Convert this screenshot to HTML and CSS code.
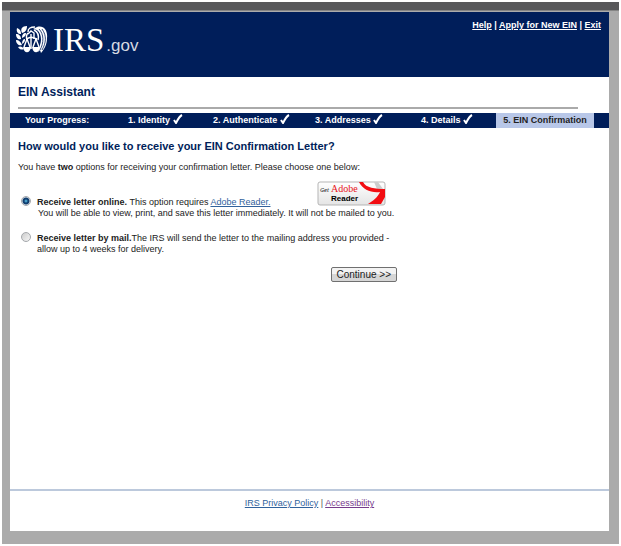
FILE: index.html
```html
<!DOCTYPE html>
<html lang="en">
<head>
<meta charset="utf-8">
<title>EIN Assistant</title>
<link rel="stylesheet" href="styles.css">
</head>
<body>
<div class="frame">
  <div class="page">
    <header class="banner">
      <div class="brand">
        <svg class="emblem" viewBox="0 0 32 28" aria-hidden="true">
          <g class="leaves">
            <path d="M11 0C6 0 4 3 6 7C10 6 11 3 11 0Z"/>
            <path d="M1 2C0 6 2 8 5 8C5 5 4 3 1 2Z"/>
            <path d="M0 8C0 12 2 14 5 13C5 10 3 8 0 8Z"/>
            <path d="M10 7C7 7 6 9 6 12C9 11 10 9 10 7Z"/>
            <path d="M0 14C0 18 3 20 6 19C5 16 3 14 0 14Z"/>
            <path d="M9 13C7 13 6 15 6 18C9 16 9 15 9 13Z"/>
            <path d="M2 21C4 24 6 24 8 23C6 20 4 20 2 21Z"/>
            <path d="M21 1C28 -1 32 5 31 12C31 18 29 22 25 27L24 24L22 26L24 19C26 14 25 7 21 4L17 3Z"/>
            <path d="M7 21H15C14 28 8 28 7 21ZM16 21H24C23 28 17 28 16 21Z"/>
          </g>
          <g class="cuts">
            <path d="M23 3C28 8 28 17 24 24M26 3C31 10 30 17 26 24"/>
          </g>
          <g class="lines">
            <path d="M12 6C12 2 15 1 19 1M12 8L15 5L18 7V13M12 7C10 9 10 11 11 14"/>
            <path d="M18 4C22 6 23 10 22 14"/>
            <path d="M15 8V23M10 13L15 11L21 13"/>
            <path d="M11 13L8 21M11 13L14 21M20 13L17 21M20 13L23 21"/>
          </g>
        </svg>
        <span class="brand-name">IRS</span><span class="brand-suffix">.gov</span>
      </div>
      <nav class="tools"><a href="#">Help</a> | <a href="#">Apply for New EIN</a> | <a href="#">Exit</a></nav>
    </header>

    <h1 class="title">EIN Assistant</h1>

    <ol class="progress">
      <li class="progress-label">Your Progress:</li>
      <li>1. Identity <svg class="check" viewBox="0 0 10 10"><path d="M1 6L3 9C5 5 7 2 9 1"/></svg></li>
      <li>2. Authenticate <svg class="check" viewBox="0 0 10 10"><path d="M1 6L3 9C5 5 7 2 9 1"/></svg></li>
      <li>3. Addresses <svg class="check" viewBox="0 0 10 10"><path d="M1 6L3 9C5 5 7 2 9 1"/></svg></li>
      <li>4. Details <svg class="check" viewBox="0 0 10 10"><path d="M1 6L3 9C5 5 7 2 9 1"/></svg></li>
      <li class="current" aria-current="step">5. EIN Confirmation</li>
    </ol>

    <main class="content">
      <h2>How would you like to receive your EIN Confirmation Letter?</h2>
      <p>You have <b>two</b> options for receiving your confirmation letter. Please choose one below:</p>
      <form class="options">
        <div class="option">
          <input type="radio" id="online" name="delivery" checked>
          <div class="option-text">
            <div class="option-head">
              <span><label for="online"><b>Receive letter online.</b> This option requires</label> <a href="#">Adobe Reader.</a></span>
              <a class="reader" href="#" aria-label="Get Adobe Reader">
                <svg viewBox="0 0 69 25">
                  <defs>
                    <linearGradient id="shade" x1="0" y1="0" x2="0" y2="1">
                      <stop offset="0" stop-color="#fff"/>
                      <stop offset="1" stop-color="#e4e4e4"/>
                    </linearGradient>
                  </defs>
                  <rect x="1" y="1" width="67" height="23" rx="2" fill="url(#shade)" stroke="#b5b5b5"/>
                  <path d="M57 1H61L66 8V9L60 8Z" fill="#ccc"/>
                  <path d="M42 1H46C49 7 58 8 68 8V16L64 23H51C56 20 61 16 63 11C54 12 46 9 42 1Z" fill="#f20d12"/>
                  <text class="reader-get" x="3" y="11">Get</text>
                  <text class="reader-adobe" x="14" y="11">Adobe</text>
                  <text class="reader-name" x="14" y="20">Reader</text>
                </svg>
              </a>
            </div>
            <div class="note">You will be able to view, print, and save this letter immediately. It will not be mailed to you.</div>
          </div>
        </div>
        <div class="option">
          <input type="radio" id="mail" name="delivery">
          <label class="option-text" for="mail"><b>Receive letter by mail.</b>The IRS will send the letter to the mailing address you provided -<br>allow up to 4 weeks for delivery.</label>
        </div>
        <button class="continue" type="button">Continue &gt;&gt;</button>
      </form>
    </main>

    <footer class="footer"><a href="#">IRS Privacy Policy</a> | <a class="visited" href="#">Accessibility</a></footer>
  </div>
</div>
</body>
</html>
```
FILE: styles.css
```css
* {
  box-sizing: border-box;
}

body {
  margin: 0;
  padding: 2px;
  min-height: 100vh;
  display: flex;
  background: #fff;
  color: #222;
  font: 9px/11px "Liberation Sans", Arial, sans-serif;
}

.frame {
  flex: 1;
  display: flex;
  padding: 0 10px 13px 8px;
  background: #ababab;
  border-top: 8px solid #58585a;
  box-shadow: inset 0 1px #858585;
}

.page {
  flex: 1;
  display: flex;
  flex-direction: column;
  margin-top: 2px;
  background: #fff;
}

.banner {
  display: flex;
  justify-content: space-between;
  align-items: flex-start;
  height: 65px;
  padding: 8px 8px 0 6px;
  background: #001e5a;
  color: #fff;
  font-weight: bold;
}

.brand {
  display: flex;
  align-items: baseline;
  padding-top: 4px;
  font-weight: normal;
}

.emblem {
  width: 32px;
  height: 28px;
  align-self: center;
  margin-right: 5px;
}

.leaves {
  fill: #fff;
}

.lines {
  fill: none;
  stroke: #fff;
  stroke-width: 1.4;
}

.cuts {
  fill: none;
  stroke: #001e5a;
  stroke-width: 0.8;
}

.brand-name {
  font: 33px/32px "Liberation Serif", "Times New Roman", serif;
}

.brand-suffix {
  margin-left: 2px;
  color: #d5d9e2;
  font-size: 17px;
}

.tools {
  font-size: 9px;
}

.tools a {
  color: inherit;
}

.title {
  margin: 9px 31px 4px 8px;
  padding-bottom: 9px;
  border-bottom: 2px solid #aaa;
  color: #001e5a;
  font-size: 12px;
  line-height: 12px;
}

.progress {
  display: grid;
  grid-template-columns: 118fr 85fr 102fr 106fr 75fr 98fr 15fr;
  margin: 0;
  padding: 0;
  list-style: none;
  background: #001e5a;
  color: #fff;
  font-size: 9px;
  font-weight: bold;
  line-height: 15px;
  white-space: nowrap;
}

.progress-label {
  padding-left: 15px;
}

.current {
  background: #b8c7e8;
  color: #222;
  text-align: center;
}

.check {
  width: 10px;
  height: 10px;
  vertical-align: -1px;
  fill: none;
  stroke: #fff;
  stroke-width: 2;
}

.content {
  flex: 1;
  padding: 12px 8px;
}

h2 {
  margin: 0 0 10px;
  color: #001e5a;
  font-size: 11px;
  line-height: 12px;
}

p {
  margin: 0;
}

a {
  color: #31629c;
}

.options {
  display: flex;
  flex-direction: column;
  gap: 13px;
  max-width: 400px;
  padding: 8px 0 0 3px;
}

.option {
  display: flex;
  align-items: flex-end;
  gap: 6px;
}

.option input {
  appearance: none;
  flex: none;
  width: 10px;
  height: 10px;
  margin: 0 0 13px;
  border: 1px solid #a5a8ac;
  border-radius: 50%;
  background: linear-gradient(135deg, #ccc, #f6f6f6);
}

.option input:checked {
  background: radial-gradient(circle, #5fd0f5 0, #123f70 2px, #123f70 3px, #e4eaf0 4px);
}

.option-text {
  white-space: nowrap;
}

.option-head {
  display: flex;
  align-items: flex-end;
  gap: 46px;
}

.reader {
  width: 69px;
  height: 25px;
  margin-bottom: 2px;
}

.reader svg {
  display: block;
}

.reader-get {
  font: italic 6px "Open Sans", sans-serif;
}

.reader-adobe {
  fill: #e8141a;
  font: 10px "Liberation Serif", serif;
}

.reader-name {
  font: bold 8px "Liberation Sans", sans-serif;
}

.note {
  padding-left: 1px;
}

.continue {
  align-self: flex-end;
  margin: -1px 21px 0 0;
  padding: 0 5px;
  border: 1px solid #707070;
  border-radius: 2px;
  background: linear-gradient(#f3f3f3 50%, #d6d6d6 50%);
  color: #222;
  font: 10px/13px "Liberation Sans", Arial, sans-serif;
}

.footer {
  padding: 7px 0 22px;
  border-top: 2px solid #bcc9dc;
  color: #555;
  text-align: center;
}

.footer .visited {
  color: #773b8b;
}
```
